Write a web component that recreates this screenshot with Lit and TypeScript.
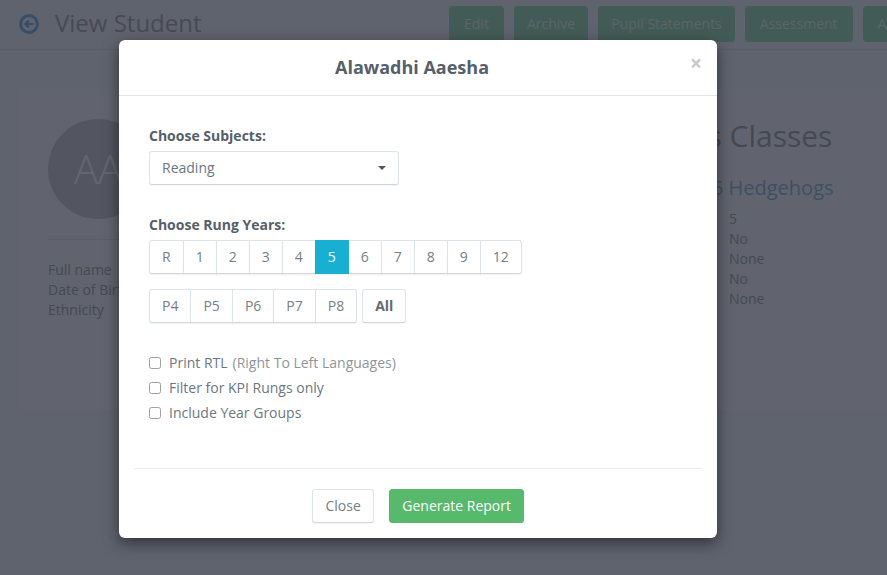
import { LitElement, html, css } from 'lit';
import { customElement } from 'lit/decorators.js';

const RUNGS = ['R', '1', '2', '3', '4', '5', '6', '7', '8', '9', '12'];
const PHASES = ['P4', 'P5', 'P6', 'P7', 'P8'];
const ACTIONS = [
  { label: 'Edit', tight: false },
  { label: 'Archive', tight: true },
  { label: 'Pupil Statements', tight: true },
  { label: 'Assessment', tight: false },
  { label: 'Attendance', tight: false },
];

@customElement('app-root')
export class AppRoot extends LitElement {
  static styles = css`
    :host {
      display: block;
      position: relative;
      width: 887px;
      height: 575px;
      overflow: hidden;
      font-family: 'Open Sans', sans-serif;
      font-size: 14px;
      line-height: 20px;
      color: #8c90a4;
      background: #bec6dc;
    }

    /* page behind the backdrop */
    .top {
      display: flex;
      align-items: center;
      box-sizing: border-box;
      height: 50px;
      padding: 0 0 2px 19px;
      border-bottom: 1px solid #b4bbcf;
      white-space: nowrap;
    }

    .back {
      width: 20px;
      height: 20px;
      margin-right: 16px;
      flex: none;
    }

    .top h1 {
      width: 394px;
      flex: none;
      margin: 0 0 2px;
      font-size: 24px;
      line-height: 30px;
      font-weight: 400;
      color: #8e94a8;
    }

    .actions {
      display: flex;
      gap: 10px;
      margin-top: 1px;
      flex: none;
    }

    .action {
      height: 36px;
      padding: 0 15px;
      display: flex;
      align-items: center;
      border-radius: 4px;
      background: #86b6ac;
      color: #b0ccce;
    }

    .action.tight {
      padding: 0 13px;
    }

    .panel {
      display: flex;
      margin: 39px 0 0 18px;
      height: 261px;
      background: #c2c9de;
      padding: 30px;
    }

    .profile {
      width: 240px;
      flex: none;
    }

    .avatar {
      width: 100px;
      height: 100px;
      border-radius: 50%;
      background: #a6abc0;
      color: #c8cce0;
      font-size: 40px;
      font-weight: 300;
      display: flex;
      align-items: center;
      justify-content: center;
    }

    .profile hr {
      border: 0;
      border-top: 1px solid #b8bdd0;
      margin: 20px 0 20px;
    }

    .classes {
      margin-left: 311px;
      white-space: nowrap;
    }

    .classes h2 {
      margin: -1px 0 0;
      font-size: 30px;
      line-height: 36px;
      font-weight: 400;
      color: #8c90a4;
    }

    .classes h3 {
      margin: 22px 0 9px;
      padding-left: 66px;
      font-size: 20px;
      line-height: 24px;
      font-weight: 400;
      color: #7aa0c4;
    }

    .facts {
      padding-left: 130px;
    }

    /* backdrop and dialog */
    .backdrop {
      position: absolute;
      inset: 0;
      background: rgba(0, 0, 0, 0.5);
    }

    .modal {
      position: absolute;
      left: 119px;
      top: 40px;
      width: 598px;
      background: #fff;
      border-radius: 6px;
      box-shadow: 0 5px 15px rgba(0, 0, 0, 0.5);
      color: #6c777f;
    }

    .modal-header {
      position: relative;
      padding: 15px 27px 15px 15px;
      border-bottom: 1px solid #e5e5e5;
      text-align: center;
    }

    .modal-header h4 {
      margin: 0;
      font-size: 18px;
      line-height: 25px;
      font-weight: 700;
      color: #55606a;
    }

    .close-x {
      position: absolute;
      top: 11px;
      right: 15px;
      font-size: 21px;
      line-height: 24px;
      font-weight: 700;
      color: #c9c9c9;
    }

    .modal-body {
      padding: 30px 30px 0;
      display: flex;
      flex-direction: column;
    }

    .field-label {
      margin-bottom: 5px;
      font-weight: 700;
      color: #55606a;
    }

    .select {
      display: flex;
      align-items: center;
      justify-content: space-between;
      box-sizing: border-box;
      width: 250px;
      height: 34px;
      padding: 0 12px;
      margin-bottom: 30px;
      border: 1px solid #dde3e6;
      border-bottom-color: #d0d8dc;
      border-radius: 3px;
      box-shadow: 0 1px 1px rgba(0, 0, 0, 0.05);
    }

    .caret {
      width: 0;
      height: 0;
      border-top: 4px solid #555;
      border-left: 4px solid transparent;
      border-right: 4px solid transparent;
    }

    .row {
      display: flex;
      gap: 5px;
    }

    .row + .row {
      margin-top: 15px;
    }

    .group {
      display: flex;
    }

    .btn {
      box-sizing: border-box;
      height: 34px;
      padding: 6px 12px;
      background: #fff;
      border: 1px solid #dde3e6;
      border-bottom-color: #d0d8dc;
      box-shadow: 0 1px 1px rgba(0, 0, 0, 0.05);
      color: #737e86;
      white-space: nowrap;
    }

    .group .btn + .btn {
      margin-left: -1px;
    }

    .group .btn:first-child {
      border-radius: 3px 0 0 3px;
    }

    .group .btn:last-child {
      border-radius: 0 3px 3px 0;
    }

    .group .btn.active {
      position: relative;
      background: #17b0d3;
      border-color: #17b0d3;
      color: #fff;
    }

    .btn.all {
      border-radius: 3px;
      font-weight: 700;
      color: #5f6b73;
    }

    .checks {
      display: flex;
      flex-direction: column;
      gap: 5px;
      margin-top: 30px;
      padding-bottom: 45px;
    }

    .check {
      display: flex;
      align-items: center;
    }

    .box {
      box-sizing: border-box;
      width: 12px;
      height: 12px;
      margin-right: 8px;
      border: 1px solid #a0a0a0;
      border-radius: 2.5px;
      background: #fff;
    }

    .hint {
      margin-left: 5px;
      color: #8e959a;
    }

    .modal-footer {
      margin: 0 15px;
      padding: 20px 0 15px;
      border-top: 1px solid #e9ecee;
      display: flex;
      justify-content: center;
      gap: 15px;
    }

    .modal-footer .btn {
      border-radius: 3px;
    }

    .modal-footer .btn.plain {
      padding: 6px 12.5px;
    }

    .modal-footer .btn.success {
      background: #56b96b;
      border-color: #56b96b;
      color: #fff;
      box-shadow: none;
    }
  `;

  render() {
    return html`
      <div class="top">
        <svg class="back" viewBox="0 0 20 20" fill="none" stroke="#6e9ccc" stroke-width="3">
          <circle cx="10" cy="10" r="8.4"></circle>
          <path d="M14.5 10H6.5M9.7 6.4L6.2 10l3.5 3.6" stroke-width="2.2"></path>
        </svg>
        <h1>View Student</h1>
        <div class="actions">
          ${ACTIONS.map((a) => html`<div class="action ${a.tight ? 'tight' : ''}">${a.label}</div>`)}
        </div>
      </div>

      <div class="panel">
        <div class="profile">
          <div class="avatar">AA</div>
          <hr />
          <div>Full name</div>
          <div>Date of Birth</div>
          <div>Ethnicity</div>
        </div>
        <div class="classes">
          <h2>Aaesha's Classes</h2>
          <h3>Year 5 Hedgehogs</h3>
          <div class="facts">
            <div>5</div>
            <div>No</div>
            <div>None</div>
            <div>No</div>
            <div>None</div>
          </div>
        </div>
      </div>

      <div class="backdrop"></div>

      <div class="modal">
        <div class="modal-header">
          <h4>Alawadhi Aaesha</h4>
          <span class="close-x">×</span>
        </div>
        <div class="modal-body">
          <div class="field-label">Choose Subjects:</div>
          <div class="select">Reading<span class="caret"></span></div>

          <div class="field-label">Choose Rung Years:</div>
          <div class="row">
            <div class="group">
              ${RUNGS.map((r) => html`<div class="btn ${r === '5' ? 'active' : ''}">${r}</div>`)}
            </div>
          </div>
          <div class="row">
            <div class="group">
              ${PHASES.map((p) => html`<div class="btn">${p}</div>`)}
            </div>
            <div class="btn all">All</div>
          </div>

          <div class="checks">
            <div class="check"><span class="box"></span>Print RTL<span class="hint">(Right To Left Languages)</span></div>
            <div class="check"><span class="box"></span>Filter for KPI Rungs only</div>
            <div class="check"><span class="box"></span>Include Year Groups</div>
          </div>
        </div>
        <div class="modal-footer">
          <div class="btn plain">Close</div>
          <div class="btn success">Generate Report</div>
        </div>
      </div>
    `;
  }
}
